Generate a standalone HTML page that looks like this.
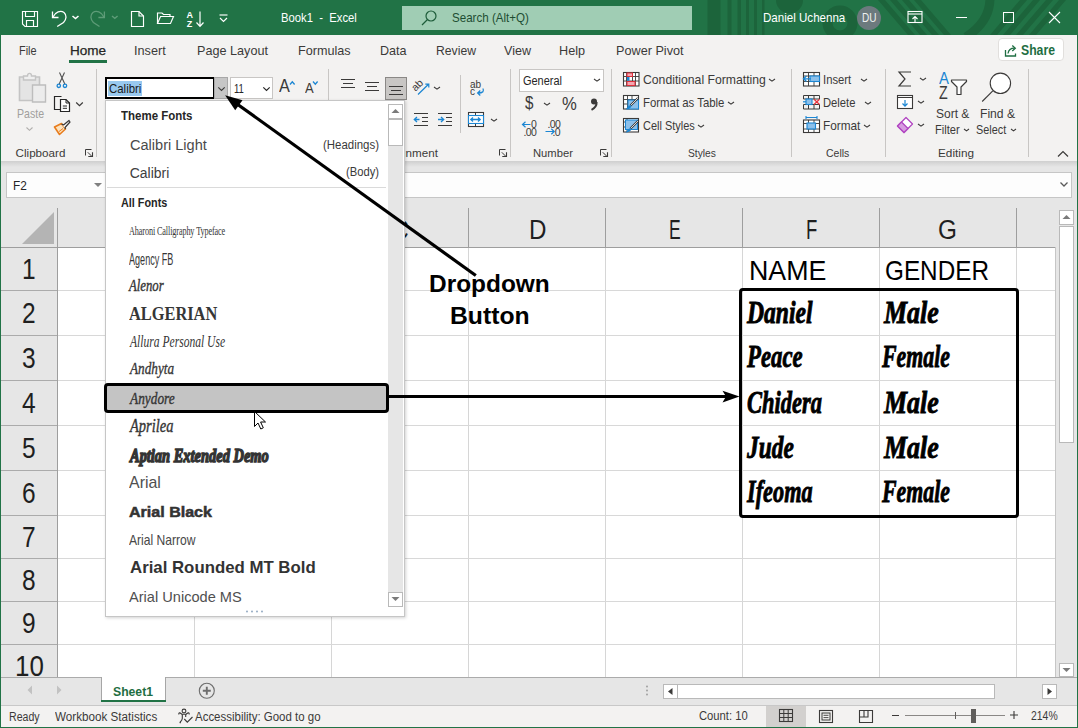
<!DOCTYPE html>
<html><head><meta charset="utf-8"><style>
html,body{margin:0;padding:0;}
body{width:1078px;height:728px;position:relative;overflow:hidden;background:#217346;font-family:"Liberation Sans",sans-serif;}
div{position:absolute;box-sizing:border-box;}
.t{white-space:pre;}
</style></head><body>
<div style="left:0px;top:0px;width:1078px;height:35px;background:#217346;"></div>
<div style="left:1px;top:35px;width:1076px;height:126px;background:#f3f2f1;"></div>
<div style="left:1px;top:161px;width:1076px;height:46px;background:#e6e6e6;"></div>
<div style="left:1px;top:161px;width:1076px;height:6px;background:linear-gradient(#cfcfcf,#e6e6e6);"></div>
<div style="left:6px;top:172px;width:100px;height:26px;background:#fdfdfd;border:1px solid #c6c6c6;"></div>
<div style="left:404px;top:172px;width:668px;height:26px;background:#fdfdfd;border:1px solid #c6c6c6;border-left:none;"></div>
<div style="left:1px;top:207px;width:1076px;height:40px;background:#e6e6e6;"></div>
<div style="left:57px;top:247px;width:998px;height:430px;background:#ffffff;"></div>
<div style="left:1px;top:247px;width:56px;height:430px;background:#e6e6e6;"></div>
<div style="left:1055px;top:207px;width:22px;height:470px;background:#e6e6e6;"></div>
<div style="left:1px;top:677px;width:1076px;height:29px;background:#e6e6e6;border-top:1px solid #ababab;border-bottom:1px solid #c8c8c8;"></div>
<div style="left:1px;top:706px;width:1076px;height:21px;background:#f3f2f1;"></div>
<div style="left:194px;top:248px;width:1px;height:429px;background:#d6d6d6;"></div>
<div style="left:194px;top:208px;width:1px;height:39px;background:#9e9e9e;"></div>
<div style="left:331px;top:248px;width:1px;height:429px;background:#d6d6d6;"></div>
<div style="left:331px;top:208px;width:1px;height:39px;background:#9e9e9e;"></div>
<div style="left:468px;top:248px;width:1px;height:429px;background:#d6d6d6;"></div>
<div style="left:468px;top:208px;width:1px;height:39px;background:#9e9e9e;"></div>
<div style="left:605px;top:248px;width:1px;height:429px;background:#d6d6d6;"></div>
<div style="left:605px;top:208px;width:1px;height:39px;background:#9e9e9e;"></div>
<div style="left:742px;top:248px;width:1px;height:429px;background:#d6d6d6;"></div>
<div style="left:742px;top:208px;width:1px;height:39px;background:#9e9e9e;"></div>
<div style="left:879px;top:248px;width:1px;height:429px;background:#d6d6d6;"></div>
<div style="left:879px;top:208px;width:1px;height:39px;background:#9e9e9e;"></div>
<div style="left:1016px;top:248px;width:1px;height:429px;background:#d6d6d6;"></div>
<div style="left:1016px;top:208px;width:1px;height:39px;background:#9e9e9e;"></div>
<div style="left:58px;top:290px;width:997px;height:1px;background:#d8d8d8;"></div>
<div style="left:1px;top:290px;width:56px;height:1px;background:#ababab;"></div>
<div style="left:58px;top:335px;width:997px;height:1px;background:#d8d8d8;"></div>
<div style="left:1px;top:335px;width:56px;height:1px;background:#ababab;"></div>
<div style="left:58px;top:380px;width:997px;height:1px;background:#d8d8d8;"></div>
<div style="left:1px;top:380px;width:56px;height:1px;background:#ababab;"></div>
<div style="left:58px;top:425px;width:997px;height:1px;background:#d8d8d8;"></div>
<div style="left:1px;top:425px;width:56px;height:1px;background:#ababab;"></div>
<div style="left:58px;top:470px;width:997px;height:1px;background:#d8d8d8;"></div>
<div style="left:1px;top:470px;width:56px;height:1px;background:#ababab;"></div>
<div style="left:58px;top:515px;width:997px;height:1px;background:#d8d8d8;"></div>
<div style="left:1px;top:515px;width:56px;height:1px;background:#ababab;"></div>
<div style="left:58px;top:558px;width:997px;height:1px;background:#d8d8d8;"></div>
<div style="left:1px;top:558px;width:56px;height:1px;background:#ababab;"></div>
<div style="left:58px;top:601px;width:997px;height:1px;background:#d8d8d8;"></div>
<div style="left:1px;top:601px;width:56px;height:1px;background:#ababab;"></div>
<div style="left:58px;top:644px;width:997px;height:1px;background:#d8d8d8;"></div>
<div style="left:1px;top:644px;width:56px;height:1px;background:#ababab;"></div>
<div style="left:57px;top:208px;width:1px;height:469px;background:#9e9e9e;"></div>
<div style="left:1px;top:247px;width:1054px;height:1px;background:#9e9e9e;"></div>
<svg style="position:absolute;left:20px;top:210px;" width="36" height="36" viewBox="0 0 36 36"><polygon points="34,2 34,34 2,34" fill="#b4b4b4"/></svg>
<div class="t" style="left:118.00px;top:216.42px;font-size:27.62px;line-height:27.62px;color:#1f1f1f;transform:scaleX(0.9188);transform-origin:0 0;">A</div>
<div class="t" style="left:256.00px;top:216.42px;font-size:27.62px;line-height:27.62px;color:#1f1f1f;transform:scaleX(0.8168);transform-origin:0 0;">B</div>
<div class="t" style="left:392.75px;top:216.42px;font-size:27.62px;line-height:27.62px;color:#1f1f1f;transform:scaleX(0.7795);transform-origin:0 0;">C</div>
<div class="t" style="left:528.60px;top:216.42px;font-size:27.62px;line-height:27.62px;color:#1f1f1f;transform:scaleX(0.8751);transform-origin:0 0;">D</div>
<div class="t" style="left:668.90px;top:216.42px;font-size:27.62px;line-height:27.62px;color:#1f1f1f;transform:scaleX(0.6371);transform-origin:0 0;">E</div>
<div class="t" style="left:805.90px;top:216.42px;font-size:27.62px;line-height:27.62px;color:#1f1f1f;transform:scaleX(0.6708);transform-origin:0 0;">F</div>
<div class="t" style="left:938.00px;top:216.42px;font-size:27.62px;line-height:27.62px;color:#1f1f1f;transform:scaleX(0.8821);transform-origin:0 0;">G</div>
<div class="t" style="left:22.20px;top:253.58px;font-size:29.80px;line-height:29.80px;color:#1f1f1f;transform:scaleX(0.8224);transform-origin:0 0;">1</div>
<div class="t" style="left:22.20px;top:297.58px;font-size:29.80px;line-height:29.80px;color:#1f1f1f;transform:scaleX(0.8224);transform-origin:0 0;">2</div>
<div class="t" style="left:22.20px;top:342.58px;font-size:29.80px;line-height:29.80px;color:#1f1f1f;transform:scaleX(0.8224);transform-origin:0 0;">3</div>
<div class="t" style="left:22.20px;top:387.58px;font-size:29.80px;line-height:29.80px;color:#1f1f1f;transform:scaleX(0.8224);transform-origin:0 0;">4</div>
<div class="t" style="left:22.20px;top:432.58px;font-size:29.80px;line-height:29.80px;color:#1f1f1f;transform:scaleX(0.8224);transform-origin:0 0;">5</div>
<div class="t" style="left:22.20px;top:477.58px;font-size:29.80px;line-height:29.80px;color:#1f1f1f;transform:scaleX(0.8224);transform-origin:0 0;">6</div>
<div class="t" style="left:22.20px;top:521.58px;font-size:29.80px;line-height:29.80px;color:#1f1f1f;transform:scaleX(0.8224);transform-origin:0 0;">7</div>
<div class="t" style="left:22.20px;top:564.58px;font-size:29.80px;line-height:29.80px;color:#1f1f1f;transform:scaleX(0.8224);transform-origin:0 0;">8</div>
<div class="t" style="left:22.20px;top:607.58px;font-size:29.80px;line-height:29.80px;color:#1f1f1f;transform:scaleX(0.8224);transform-origin:0 0;">9</div>
<div class="t" style="left:14.60px;top:650.58px;font-size:29.80px;line-height:29.80px;color:#1f1f1f;transform:scaleX(0.8708);transform-origin:0 0;">10</div>
<div class="t" style="left:749.00px;top:256.08px;font-size:28.49px;line-height:28.49px;color:#000;transform:scaleX(0.9401);transform-origin:0 0;">NAME</div>
<div class="t" style="left:884.60px;top:256.08px;font-size:28.49px;line-height:28.49px;color:#000;transform:scaleX(0.8529);transform-origin:0 0;">GENDER</div>
<div class="t" style="left:746.74px;top:296.38px;font-size:32.38px;line-height:32.38px;color:#000;font-family:'Liberation Serif',serif;font-weight:bold;font-style:italic;transform:scaleX(0.7295);transform-origin:0 0;-webkit-text-stroke:0.9px #000;">Daniel</div>
<div class="t" style="left:883.89px;top:296.38px;font-size:32.38px;line-height:32.38px;color:#000;font-family:'Liberation Serif',serif;font-weight:bold;font-style:italic;transform:scaleX(0.8009);transform-origin:0 0;-webkit-text-stroke:0.9px #000;">Male</div>
<div class="t" style="left:746.61px;top:340.28px;font-size:32.38px;line-height:32.38px;color:#000;font-family:'Liberation Serif',serif;font-weight:bold;font-style:italic;transform:scaleX(0.7036);transform-origin:0 0;-webkit-text-stroke:0.9px #000;">Peace</div>
<div class="t" style="left:882.21px;top:340.28px;font-size:32.38px;line-height:32.38px;color:#000;font-family:'Liberation Serif',serif;font-weight:bold;font-style:italic;transform:scaleX(0.6752);transform-origin:0 0;-webkit-text-stroke:0.9px #000;">Female</div>
<div class="t" style="left:746.50px;top:385.78px;font-size:32.38px;line-height:32.38px;color:#000;font-family:'Liberation Serif',serif;font-weight:bold;font-style:italic;transform:scaleX(0.6946);transform-origin:0 0;-webkit-text-stroke:0.9px #000;">Chidera</div>
<div class="t" style="left:883.89px;top:385.78px;font-size:32.38px;line-height:32.38px;color:#000;font-family:'Liberation Serif',serif;font-weight:bold;font-style:italic;transform:scaleX(0.8009);transform-origin:0 0;-webkit-text-stroke:0.9px #000;">Male</div>
<div class="t" style="left:746.62px;top:431.38px;font-size:32.38px;line-height:32.38px;color:#000;font-family:'Liberation Serif',serif;font-weight:bold;font-style:italic;transform:scaleX(0.7240);transform-origin:0 0;-webkit-text-stroke:0.9px #000;">Jude</div>
<div class="t" style="left:883.89px;top:431.38px;font-size:32.38px;line-height:32.38px;color:#000;font-family:'Liberation Serif',serif;font-weight:bold;font-style:italic;transform:scaleX(0.8009);transform-origin:0 0;-webkit-text-stroke:0.9px #000;">Male</div>
<div class="t" style="left:746.72px;top:475.18px;font-size:32.38px;line-height:32.38px;color:#000;font-family:'Liberation Serif',serif;font-weight:bold;font-style:italic;transform:scaleX(0.6888);transform-origin:0 0;-webkit-text-stroke:0.9px #000;">Ifeoma</div>
<div class="t" style="left:882.21px;top:475.18px;font-size:32.38px;line-height:32.38px;color:#000;font-family:'Liberation Serif',serif;font-weight:bold;font-style:italic;transform:scaleX(0.6752);transform-origin:0 0;-webkit-text-stroke:0.9px #000;">Female</div>
<div class="t" style="left:429.10px;top:272.97px;font-size:23.55px;line-height:23.55px;color:#000;font-weight:bold;transform:scaleX(1.0375);transform-origin:0 0;">Dropdown</div>
<div class="t" style="left:449.90px;top:304.87px;font-size:23.55px;line-height:23.55px;color:#000;font-weight:bold;transform:scaleX(1.0499);transform-origin:0 0;">Button</div>
<div class="t" style="left:18.70px;top:44.67px;font-size:12.79px;line-height:12.79px;color:#3b3a39;transform:scaleX(0.8547);transform-origin:0 0;">File</div>
<div class="t" style="left:69.70px;top:44.67px;font-size:12.79px;line-height:12.79px;color:#262626;transform:scaleX(1.0600);transform-origin:0 0;-webkit-text-stroke:0.25px #262626;">Home</div>
<div class="t" style="left:134.00px;top:44.67px;font-size:12.79px;line-height:12.79px;color:#3b3a39;transform:scaleX(0.9913);transform-origin:0 0;">Insert</div>
<div class="t" style="left:197.00px;top:44.67px;font-size:12.79px;line-height:12.79px;color:#3b3a39;transform:scaleX(0.9886);transform-origin:0 0;">Page Layout</div>
<div class="t" style="left:298.00px;top:44.67px;font-size:12.79px;line-height:12.79px;color:#3b3a39;transform:scaleX(0.9881);transform-origin:0 0;">Formulas</div>
<div class="t" style="left:380.20px;top:44.67px;font-size:12.79px;line-height:12.79px;color:#3b3a39;transform:scaleX(0.9833);transform-origin:0 0;">Data</div>
<div class="t" style="left:436.00px;top:44.67px;font-size:12.79px;line-height:12.79px;color:#3b3a39;transform:scaleX(0.9534);transform-origin:0 0;">Review</div>
<div class="t" style="left:504.20px;top:44.67px;font-size:12.79px;line-height:12.79px;color:#3b3a39;transform:scaleX(0.9818);transform-origin:0 0;">View</div>
<div class="t" style="left:559.40px;top:44.67px;font-size:12.79px;line-height:12.79px;color:#3b3a39;transform:scaleX(0.9892);transform-origin:0 0;">Help</div>
<div class="t" style="left:616.20px;top:44.67px;font-size:12.79px;line-height:12.79px;color:#3b3a39;transform:scaleX(0.9906);transform-origin:0 0;">Power Pivot</div>
<div style="left:69px;top:60px;width:38px;height:3px;background:#217346;"></div>
<div style="left:998px;top:38px;width:66px;height:23px;background:#fff;border:1px solid #e1dfdd;border-radius:4px;"></div>
<div class="t" style="left:1021.00px;top:44.11px;font-size:13.81px;line-height:13.81px;color:#1e6e42;font-weight:bold;transform:scaleX(0.8857);transform-origin:0 0;">Share</div>
<svg style="position:absolute;left:1004px;top:44px;" width="14" height="13" viewBox="0 0 14 13"><path d="M1.5 6 V12 H11.5 V9.5" fill="none" stroke="#1e6e42" stroke-width="1.3"/><path d="M4 9.5 C4.5 6 7 4.2 10.5 4.2" fill="none" stroke="#1e6e42" stroke-width="1.3"/><path d="M8.3 1.5 L11.3 4.2 L8.3 7" fill="none" stroke="#1e6e42" stroke-width="1.3"/></svg>
<div class="t" style="left:15.60px;top:147.16px;font-size:11.63px;line-height:11.63px;color:#3b3a39;">Clipboard</div>
<div class="t" style="left:532.80px;top:147.16px;font-size:11.63px;line-height:11.63px;color:#3b3a39;transform:scaleX(0.9652);transform-origin:0 0;">Number</div>
<div class="t" style="left:687.50px;top:147.16px;font-size:11.63px;line-height:11.63px;color:#3b3a39;transform:scaleX(0.8805);transform-origin:0 0;">Styles</div>
<div class="t" style="left:826.00px;top:147.16px;font-size:11.63px;line-height:11.63px;color:#3b3a39;transform:scaleX(0.9006);transform-origin:0 0;">Cells</div>
<div class="t" style="left:938.30px;top:147.16px;font-size:11.63px;line-height:11.63px;color:#3b3a39;transform:scaleX(1.0118);transform-origin:0 0;">Editing</div>
<div style="left:96px;top:69px;width:1px;height:88px;background:#c8c6c4;"></div>
<div style="left:328px;top:69px;width:1px;height:88px;background:#c8c6c4;"></div>
<div style="left:510px;top:69px;width:1px;height:88px;background:#c8c6c4;"></div>
<div style="left:611px;top:69px;width:1px;height:88px;background:#c8c6c4;"></div>
<div style="left:791px;top:69px;width:1px;height:88px;background:#c8c6c4;"></div>
<div style="left:885px;top:69px;width:1px;height:88px;background:#c8c6c4;"></div>
<div style="left:1028px;top:69px;width:1px;height:88px;background:#c8c6c4;"></div>
<div style="left:460px;top:75px;width:1px;height:58px;background:#c8c6c4;"></div>
<svg style="position:absolute;left:84px;top:148px;" width="10" height="10" viewBox="0 0 10 10"><path d="M1.5 7.5 V1.5 H7.5" fill="none" stroke="#3b3a39" stroke-width="1"/><path d="M3.8 4.3 L8 8.5" stroke="#3b3a39" stroke-width="1"/><path d="M8.5 4.3 V8.5 H4.3" fill="none" stroke="#3b3a39" stroke-width="1.1"/></svg>
<svg style="position:absolute;left:498px;top:148px;" width="10" height="10" viewBox="0 0 10 10"><path d="M1.5 7.5 V1.5 H7.5" fill="none" stroke="#3b3a39" stroke-width="1"/><path d="M3.8 4.3 L8 8.5" stroke="#3b3a39" stroke-width="1"/><path d="M8.5 4.3 V8.5 H4.3" fill="none" stroke="#3b3a39" stroke-width="1.1"/></svg>
<svg style="position:absolute;left:599px;top:148px;" width="10" height="10" viewBox="0 0 10 10"><path d="M1.5 7.5 V1.5 H7.5" fill="none" stroke="#3b3a39" stroke-width="1"/><path d="M3.8 4.3 L8 8.5" stroke="#3b3a39" stroke-width="1"/><path d="M8.5 4.3 V8.5 H4.3" fill="none" stroke="#3b3a39" stroke-width="1.1"/></svg>
<svg style="position:absolute;left:1057px;top:150px;" width="12" height="8" viewBox="0 0 12 8"><path d="M1 6.5 L6 1.5 L11 6.5" fill="none" stroke="#3b3a39" stroke-width="1.2"/></svg>
<svg style="position:absolute;left:690px;top:0px;" width="388" height="35" viewBox="0 0 388 35"><g transform="translate(-690,0)" fill="#1c643b"><rect x="707.5" y="0" width="13" height="35"/><rect x="727.5" y="0" width="4" height="35"/><rect x="737.5" y="0" width="3.5" height="35"/><rect x="746" y="0" width="3" height="35"/><rect x="754" y="0" width="3" height="35"/><rect x="762" y="0" width="2.5" height="35"/><path d="M776 0 A13.5 13.5 0 0 0 803 0 Z"/><path d="M878 0 L885 0 L915 35 L908 35 Z"/><path d="M890 0 L897 0 L927 35 L920 35 Z"/><path d="M902 0 L909 0 L939 35 L932 35 Z"/><path d="M914 0 L921 0 L951 35 L944 35 Z"/><path d="M1020 0 L1027 0 L997 35 L990 35 Z"/><path d="M1033 0 L1040 0 L1010 35 L1003 35 Z"/><path d="M1046 0 L1053 0 L1023 35 L1016 35 Z"/><path d="M1059 0 L1066 0 L1036 35 L1029 35 Z"/></g><g transform="translate(-690,0)" fill="none" stroke="#1c643b"><circle cx="840" cy="23" r="12.5" stroke-width="10"/><path d="M990 -2 C990 15 980 28 966 37" stroke-width="9"/></g></svg>
<div class="t" style="left:280.70px;top:11.72px;font-size:12.50px;line-height:12.50px;color:#ffffff;transform:scaleX(0.9017);transform-origin:0 0;">Book1  -  Excel</div>
<div style="left:402px;top:6px;width:290px;height:24px;background:#a0cdb4;"></div>
<svg style="position:absolute;left:420px;top:9px;" width="18" height="18" viewBox="0 0 18 18"><circle cx="11" cy="7" r="5" fill="none" stroke="#1e5c3a" stroke-width="1.2"/><path d="M7.5 10.5 L2 16" stroke="#1e5c3a" stroke-width="1.2"/></svg>
<div class="t" style="left:452.30px;top:11.87px;font-size:12.79px;line-height:12.79px;color:#1e4d33;transform:scaleX(0.9066);transform-origin:0 0;">Search (Alt+Q)</div>
<div class="t" style="left:763.00px;top:12.37px;font-size:12.79px;line-height:12.79px;color:#ffffff;transform:scaleX(0.9048);transform-origin:0 0;">Daniel Uchenna</div>
<svg style="position:absolute;left:856px;top:5px;" width="26" height="26" viewBox="0 0 26 26"><circle cx="13" cy="13" r="12" fill="#6c7a7e"/></svg>
<div class="t" style="left:861.50px;top:12.36px;font-size:12.21px;line-height:12.21px;color:#eef0f0;transform:scaleX(0.8219);transform-origin:0 0;">DU</div>
<svg style="position:absolute;left:907px;top:10px;" width="16" height="14" viewBox="0 0 16 14"><rect x="1" y="1.5" width="14" height="11" fill="none" stroke="#fff" stroke-width="1.1"/><path d="M1 4 H15" stroke="#fff" stroke-width="1.1"/><path d="M5.5 9 L8 6.5 L10.5 9 M8 6.5 V12" fill="none" stroke="#fff" stroke-width="1.1"/></svg>
<div style="left:956px;top:17px;width:11px;height:1px;background:#fff;"></div>
<div style="left:1003px;top:12px;width:11px;height:11px;border:1px solid #fff;"></div>
<svg style="position:absolute;left:1048px;top:11px;" width="13" height="13" viewBox="0 0 13 13"><path d="M1 1 L12 12 M12 1 L1 12" stroke="#fff" stroke-width="1.1"/></svg>
<svg style="position:absolute;left:21px;top:10px;" width="18" height="18" viewBox="0 0 18 18"><path d="M1.5 1.5 H16.5 V16.5 H4 L1.5 14 Z" fill="none" stroke="#fff" stroke-width="1.15"/><path d="M4.5 1.5 V6.5 H13.5 V1.5" fill="none" stroke="#fff" stroke-width="1.15"/><path d="M5.5 16.5 V10.5 H12.5 V16.5" fill="none" stroke="#fff" stroke-width="1.15"/></svg>
<svg style="position:absolute;left:45px;top:5px;" width="80" height="27" viewBox="0 0 80 27"><path d="M7.5 6.5 V12.5 H13.5" fill="none" stroke="#fff" stroke-width="1.3"/><path d="M8 12 C10.5 7 15.5 5 19 7.5 C22 10 21.5 14.5 18.5 17.5 L12.2 21.5" fill="none" stroke="#fff" stroke-width="1.3"/><path d="M27.5 11 L30.5 13.5 L33.5 11" fill="none" stroke="#fff" stroke-width="1.6"/><path d="M59.4 6.5 V12.5 H53.4" fill="none" stroke="#5e9c78" stroke-width="1.3"/><path d="M58.9 12 C56.4 7 51.4 5 47.9 7.5 C44.9 10 45.4 14.5 48.4 17.5 L54.5 21.5" fill="none" stroke="#5e9c78" stroke-width="1.3"/><path d="M67 11 L69.8 13.3 L72.6 11" fill="none" stroke="#5e9c78" stroke-width="1.4"/></svg>
<svg style="position:absolute;left:130px;top:10px;" width="15" height="18" viewBox="0 0 15 18"><path d="M1.5 1.5 H9 L13.5 6 V16.5 H1.5 Z" fill="none" stroke="#fff" stroke-width="1.15"/><path d="M9 1.5 V6 H13.5" fill="none" stroke="#fff" stroke-width="1.15"/></svg>
<svg style="position:absolute;left:156px;top:11px;" width="19" height="15" viewBox="0 0 19 15"><path d="M1.5 12.5 V2 H6 L7.5 3.5 H14 V5.5" fill="none" stroke="#fff" stroke-width="1.15"/><path d="M1.5 12.5 L4.5 5.5 H17.5 L14.5 12.5 Z" fill="none" stroke="#fff" stroke-width="1.15"/></svg>
<svg style="position:absolute;left:185px;top:10px;" width="20" height="18" viewBox="0 0 20 18"><text x="1.5" y="7.6" font-size="9" font-weight="bold" fill="#fff" font-family="Liberation Sans">A</text><text x="1.8" y="16.6" font-size="9" font-weight="bold" fill="#fff" font-family="Liberation Sans">Z</text><path d="M15 1.5 V16 M11.5 12.5 L15 16.3 L18.5 12.5" fill="none" stroke="#fff" stroke-width="1.2"/></svg>
<svg style="position:absolute;left:218px;top:14px;" width="11" height="9" viewBox="0 0 11 9"><path d="M1.5 1 H9.5" fill="none" stroke="#fff" stroke-width="1.15"/><path d="M2 4 L5.5 7.5 L9 4" fill="none" stroke="#fff" stroke-width="1.15"/></svg>
<svg style="position:absolute;left:17px;top:71px;" width="32" height="34" viewBox="0 0 32 34"><path d="M2.5 6 H22.5 V29.5 H2.5 Z" fill="#e4e4e4" stroke="#c4c4c4" stroke-width="1.6"/><path d="M6.5 9 V5 H10.5 C10.5 1.5 14.5 1.5 14.5 5 H18.5 V9 Z" fill="#efefef" stroke="#c4c4c4" stroke-width="1.4"/><path d="M15.5 14 H28.5 V31 H15.5 Z" fill="#ececec" stroke="#bdbdbd" stroke-width="1.4"/></svg>
<div class="t" style="left:16.90px;top:107.94px;font-size:12.35px;line-height:12.35px;color:#a19f9d;transform:scaleX(0.8585);transform-origin:0 0;">Paste</div>
<svg style="position:absolute;left:25px;top:126px;" width="9" height="6" viewBox="0 0 9 6"><path d="M1.5 1.5 L4.5 4.3 L7.5 1.5" fill="none" stroke="#b0aeac" stroke-width="1.1"/></svg>
<svg style="position:absolute;left:55px;top:71px;" width="14" height="18" viewBox="0 0 14 18"><path d="M4.5 1.5 L9.8 13 M9.5 1.5 L4.2 13" stroke="#505050" stroke-width="1.1"/><circle cx="3.8" cy="14.8" r="1.7" fill="none" stroke="#1b86d3" stroke-width="1.3"/><circle cx="10" cy="14.8" r="1.7" fill="none" stroke="#1b86d3" stroke-width="1.3"/></svg>
<svg style="position:absolute;left:53px;top:95px;" width="19" height="18" viewBox="0 0 19 18"><path d="M8.5 1.5 H1.5 V14.5 H7" fill="none" stroke="#262626" stroke-width="1.2"/><path d="M7.5 4.5 H13 L16.5 8 V16.5 H7.5 Z" fill="#fff" stroke="#262626" stroke-width="1.2"/><path d="M13 4.5 V8 H16.5" fill="none" stroke="#262626" stroke-width="1"/><path d="M9.8 11 H14 M9.8 13.3 H14" stroke="#262626" stroke-width="1"/></svg>
<svg style="position:absolute;left:75px;top:101px;" width="9" height="7" viewBox="0 0 9 7"><path d="M1.2 1.5 L4.5 4.7 L7.8 1.5" fill="none" stroke="#3b3a39" stroke-width="1.2"/></svg>
<svg style="position:absolute;left:53px;top:119px;" width="18" height="17" viewBox="0 0 18 17"><path d="M1.5 8 L8.5 4.5 L12.5 10 L6.5 15.5 Z" fill="#fce3bf" stroke="#e87d1e" stroke-width="1.6" stroke-linejoin="round"/><path d="M6 12.5 L10 9.5" stroke="#e87d1e" stroke-width="1"/><path d="M8.5 5 L10.5 6 L16 1.5 L17 3 L12 8.5 L12.5 10" fill="#fff" stroke="#3b3a39" stroke-width="1.2" stroke-linejoin="round"/></svg>
<div style="left:105px;top:77px;width:110px;height:22px;background:#fff;border:2px solid #000;"></div>
<div style="left:108px;top:81px;width:34px;height:15px;background:#99c9ef;"></div>
<div class="t" style="left:108.80px;top:82.84px;font-size:12.35px;line-height:12.35px;color:#1a1a1a;transform:scaleX(0.9250);transform-origin:0 0;">Calibri</div>
<div style="left:214px;top:77px;width:14px;height:22px;background:#c6c6c6;border:1px solid #a8a8a8;"></div>
<svg style="position:absolute;left:217px;top:86px;" width="9" height="6" viewBox="0 0 9 6"><path d="M1.3 1.3 L4.5 4.5 L7.7 1.3" fill="none" stroke="#3b3a39" stroke-width="1.1"/></svg>
<div style="left:230px;top:77px;width:43px;height:22px;background:#fff;border:1px solid #c8c6c4;"></div>
<div class="t" style="left:233.80px;top:82.90px;font-size:12.65px;line-height:12.65px;color:#262626;transform:scaleX(0.7528);transform-origin:0 0;">11</div>
<svg style="position:absolute;left:262px;top:86px;" width="9" height="6" viewBox="0 0 9 6"><path d="M1.3 1.3 L4.5 4.5 L7.7 1.3" fill="none" stroke="#262626" stroke-width="1.2"/></svg>
<div class="t" style="left:279.00px;top:77.40px;font-size:18.31px;line-height:18.31px;color:#3b3a39;transform:scaleX(0.8883);transform-origin:0 0;">A</div>
<svg style="position:absolute;left:289px;top:80px;" width="7" height="6" viewBox="0 0 7 6"><path d="M1 4.5 L3.3 1.8 L5.6 4.5" fill="none" stroke="#1b86d3" stroke-width="1.3"/></svg>
<div class="t" style="left:304.70px;top:81.42px;font-size:14.39px;line-height:14.39px;color:#3b3a39;transform:scaleX(0.9024);transform-origin:0 0;">A</div>
<svg style="position:absolute;left:312px;top:80px;" width="7" height="6" viewBox="0 0 7 6"><path d="M1 1.5 L3.3 4.2 L5.6 1.5" fill="none" stroke="#1b86d3" stroke-width="1.3"/></svg>
<svg style="position:absolute;left:340px;top:78px;" width="16" height="13" viewBox="0 0 16 13"><path d="M1 1.5 H15 M3 5.5 H13 M1 9.5 H15" stroke="#3b3a39" stroke-width="1.1"/></svg>
<svg style="position:absolute;left:364px;top:81px;" width="16" height="13" viewBox="0 0 16 13"><path d="M1 1.5 H15 M3 5.5 H13 M1 9.5 H15" stroke="#3b3a39" stroke-width="1.1"/></svg>
<div style="left:385px;top:77px;width:22px;height:23px;background:#c8c6c4;border:1px solid #8a8886;"></div>
<svg style="position:absolute;left:388px;top:84px;" width="16" height="14" viewBox="0 0 16 14"><path d="M1 2.5 H15 M3 6.5 H13 M1 10.5 H15" stroke="#3b3a39" stroke-width="1.1"/></svg>
<svg style="position:absolute;left:410px;top:76px;" width="24" height="22" viewBox="0 0 24 22"><text x="0" y="0" font-size="10.5" font-family="Liberation Sans" fill="#3b3a39" transform="translate(5.5,15.8) rotate(-45)">ab</text><path d="M8 18.5 L18.5 8.2 M15.3 8.2 H18.8 V11.5" fill="none" stroke="#1b86d3" stroke-width="1.2"/></svg>
<svg style="position:absolute;left:432.6px;top:86px;" width="8" height="5" viewBox="0 0 8 5"><path d="M1 1 L4.0 3.1500000000000004 L7 1" fill="none" stroke="#3b3a39" stroke-width="1.1"/></svg>
<svg style="position:absolute;left:412px;top:111px;" width="18" height="16" viewBox="0 0 18 16"><path d="M2 2.5 H16 M10 6.5 H16 M10 10.5 H16 M2 14.5 H16" stroke="#3b3a39" stroke-width="1.1"/><path d="M7.5 8.5 H2.5 M5 6 L2.3 8.5 L5 11" fill="none" stroke="#1b86d3" stroke-width="1.3"/></svg>
<svg style="position:absolute;left:436px;top:111px;" width="18" height="16" viewBox="0 0 18 16"><path d="M2 2.5 H16 M10 6.5 H16 M10 10.5 H16 M2 14.5 H16" stroke="#3b3a39" stroke-width="1.1"/><path d="M2 8.5 H7.5 M5 6 L7.7 8.5 L5 11" fill="none" stroke="#1b86d3" stroke-width="1.3"/></svg>
<svg style="position:absolute;left:468px;top:78px;" width="18" height="19" viewBox="0 0 18 19"><text x="2" y="9.5" font-size="10" font-family="Liberation Sans" fill="#3b3a39">ab</text><text x="2" y="17" font-size="10" font-family="Liberation Sans" fill="#3b3a39">c</text><path d="M14.8 10.5 C16.5 13 15 15 10 15 M12.3 12.6 L9.7 15 L12.3 17.4" fill="none" stroke="#1b86d3" stroke-width="1.3"/></svg>
<svg style="position:absolute;left:467px;top:111px;" width="18" height="17" viewBox="0 0 18 17"><rect x="1.5" y="1.5" width="15" height="14" fill="#fff" stroke="#3b3a39" stroke-width="1.1"/><path d="M8.5 1.5 V4.5 M8.5 12.5 V15.5" stroke="#3b3a39" stroke-width="1"/><rect x="1.5" y="4.5" width="15" height="8" fill="#fff" stroke="#1b86d3" stroke-width="1.1"/><path d="M4 8.5 H13 M6 6.5 L3.8 8.5 L6 10.5 M11 6.5 L13.2 8.5 L11 10.5" fill="none" stroke="#1b86d3" stroke-width="1.3"/></svg>
<svg style="position:absolute;left:489.5px;top:117.7px;" width="8" height="5" viewBox="0 0 8 5"><path d="M1 1 L4.0 3.1500000000000004 L7 1" fill="none" stroke="#3b3a39" stroke-width="1.1"/></svg>
<div class="t" style="left:386.21px;top:147.16px;font-size:11.63px;line-height:11.63px;color:#3b3a39;">Alignment</div>
<div style="left:519px;top:69px;width:85px;height:23px;background:#fff;border:1px solid #c8c6c4;"></div>
<div class="t" style="left:522.60px;top:75.20px;font-size:12.65px;line-height:12.65px;color:#262626;transform:scaleX(0.8663);transform-origin:0 0;">General</div>
<svg style="position:absolute;left:593px;top:78px;" width="8" height="5" viewBox="0 0 8 5"><path d="M1 1 L4.0 3.1500000000000004 L7 1" fill="none" stroke="#3b3a39" stroke-width="1.1"/></svg>
<div class="t" style="left:525.40px;top:94.02px;font-size:18.17px;line-height:18.17px;color:#3b3a39;transform:scaleX(0.8330);transform-origin:0 0;">$</div>
<svg style="position:absolute;left:543px;top:102px;" width="8" height="5" viewBox="0 0 8 5"><path d="M1 1 L4.0 3.1500000000000004 L7 1" fill="none" stroke="#3b3a39" stroke-width="1.1"/></svg>
<div class="t" style="left:561.60px;top:94.36px;font-size:19.19px;line-height:19.19px;color:#3b3a39;transform:scaleX(0.8667);transform-origin:0 0;">%</div>
<svg style="position:absolute;left:588px;top:97px;" width="11" height="15" viewBox="0 0 11 15"><circle cx="6" cy="4.5" r="3" fill="#3b3a39"/><path d="M8.6 5 C8.8 8.5 7 11 3.5 12.8" fill="none" stroke="#3b3a39" stroke-width="2"/></svg>
<svg style="position:absolute;left:520px;top:118px;" width="20" height="19" viewBox="0 0 20 19"><text x="11" y="9.5" font-size="10.5" font-family="Liberation Sans" fill="#3b3a39">0</text><text x="3.5" y="17.5" font-size="10.5" font-family="Liberation Sans" fill="#3b3a39" letter-spacing="-0.6">.00</text><path d="M2.5 6.5 H10.5 M5.5 3.8 L2.5 6.5 L5.5 9.2" fill="none" stroke="#1b86d3" stroke-width="1.2"/></svg>
<svg style="position:absolute;left:544px;top:118px;" width="20" height="19" viewBox="0 0 20 19"><text x="3.5" y="9.5" font-size="10.5" font-family="Liberation Sans" fill="#3b3a39" letter-spacing="-0.6">.00</text><text x="8.5" y="17.5" font-size="10.5" font-family="Liberation Sans" fill="#3b3a39" letter-spacing="-0.6">.0</text><path d="M1.5 13.5 H10 M7.3 10.8 L10.2 13.5 L7.3 16.2" fill="none" stroke="#1b86d3" stroke-width="1.2"/></svg>
<svg style="position:absolute;left:622px;top:71px;" width="18" height="16" viewBox="0 0 18 16"><rect x="1.5" y="1.5" width="15.5" height="13.5" fill="#fff" stroke="#3b3a39" stroke-width="1.1"/><path d="M4.5 1.5 V15 M10.5 5.5 V10 M13.5 1.5 V15 M1.5 5.5 H17 M1.5 10 H17" stroke="#3b3a39" stroke-width="0.9"/><rect x="5" y="2" width="5.5" height="3.5" fill="#f4a6b0" stroke="#e0303c" stroke-width="1"/><rect x="5" y="10.5" width="8" height="4" fill="#f4a6b0" stroke="#e0303c" stroke-width="1"/><rect x="5" y="6" width="2.5" height="3.8" fill="#1b86d3"/></svg>
<svg style="position:absolute;left:622px;top:94px;" width="18" height="16" viewBox="0 0 18 16"><rect x="1.5" y="1.5" width="15" height="13.5" fill="#fff" stroke="#3b3a39" stroke-width="1.1"/><path d="M5.5 1.5 V15 M10 1.5 V6 M1.5 5.5 H16.5 M1.5 10 H5.5" stroke="#3b3a39" stroke-width="0.9"/><rect x="6" y="6" width="10.5" height="9" fill="#8cc0ea" stroke="#1b86d3" stroke-width="1"/><path d="M16 4 L8.5 11.5" stroke="#3b3a39" stroke-width="2.2"/><path d="M16 4 L8.5 11.5" stroke="#fff" stroke-width="0.8"/><path d="M8.5 11 C6 11.5 5 14 3.5 15.5 C6.5 15.5 9 14 9.5 12" fill="#1b86d3"/></svg>
<svg style="position:absolute;left:622px;top:117px;" width="18" height="16" viewBox="0 0 18 16"><rect x="1.5" y="1.5" width="15" height="13.5" fill="#fff" stroke="#3b3a39" stroke-width="1.1"/><path d="M1.5 5 H5 M5 1.5 V15 M1.5 10 H5" stroke="#3b3a39" stroke-width="0.9"/><rect x="3.5" y="3" width="12" height="9.5" fill="#8cc0ea" stroke="#1b86d3" stroke-width="1"/><path d="M16 4 L8.5 11.5" stroke="#3b3a39" stroke-width="2.2"/><path d="M16 4 L8.5 11.5" stroke="#fff" stroke-width="0.8"/><path d="M8.5 11 C6 11.5 5 14 3.5 15.5 C6.5 15.5 9 14 9.5 12" fill="#1b86d3"/></svg>
<div class="t" style="left:642.50px;top:74.04px;font-size:12.35px;line-height:12.35px;color:#3b3a39;transform:scaleX(0.9896);transform-origin:0 0;">Conditional Formatting</div>
<svg style="position:absolute;left:768px;top:78px;" width="8" height="5" viewBox="0 0 8 5"><path d="M1 1 L4.0 3.1500000000000004 L7 1" fill="none" stroke="#3b3a39" stroke-width="1.1"/></svg>
<div class="t" style="left:642.50px;top:96.94px;font-size:12.35px;line-height:12.35px;color:#3b3a39;transform:scaleX(0.9226);transform-origin:0 0;">Format as Table</div>
<svg style="position:absolute;left:727px;top:101px;" width="8" height="5" viewBox="0 0 8 5"><path d="M1 1 L4.0 3.1500000000000004 L7 1" fill="none" stroke="#3b3a39" stroke-width="1.1"/></svg>
<div class="t" style="left:642.50px;top:120.14px;font-size:12.35px;line-height:12.35px;color:#3b3a39;transform:scaleX(0.8891);transform-origin:0 0;">Cell Styles</div>
<svg style="position:absolute;left:697px;top:124px;" width="8" height="5" viewBox="0 0 8 5"><path d="M1 1 L4.0 3.1500000000000004 L7 1" fill="none" stroke="#3b3a39" stroke-width="1.1"/></svg>
<svg style="position:absolute;left:802px;top:71px;" width="19" height="16" viewBox="0 0 19 16"><rect x="1.5" y="1.5" width="16" height="13.5" fill="#fff" stroke="#3b3a39" stroke-width="1.1"/><path d="M6.5 1.5 V15 M12 1.5 V15 M1.5 5 H17.5 M1.5 10.5 H17.5" stroke="#3b3a39" stroke-width="0.9"/><rect x="8" y="5" width="9.5" height="5.5" fill="#8cc0ea" stroke="#1b86d3" stroke-width="1.1"/><path d="M9 7.8 H1.5 M4.5 5 L1.5 7.8 L4.5 10.6" fill="none" stroke="#1b86d3" stroke-width="1.3"/></svg>
<div class="t" style="left:822.50px;top:74.04px;font-size:12.35px;line-height:12.35px;color:#3b3a39;transform:scaleX(0.9130);transform-origin:0 0;">Insert</div>
<svg style="position:absolute;left:860px;top:78px;" width="8" height="5" viewBox="0 0 8 5"><path d="M1 1 L4.0 3.1500000000000004 L7 1" fill="none" stroke="#3b3a39" stroke-width="1.1"/></svg>
<svg style="position:absolute;left:802px;top:94px;" width="19" height="16" viewBox="0 0 19 16"><path d="M1.5 5 V1.5 H17.5 V5 M1.5 10.5 V15 H17.5 V10.5 M6.5 1.5 V5 M12 1.5 V5 M6.5 10.5 V15 M12 10.5 V15 M1.5 5 H17.5 M1.5 10.5 H17.5" fill="none" stroke="#3b3a39" stroke-width="1"/><rect x="4" y="5" width="6" height="5.5" fill="#8cc0ea" stroke="#1b86d3" stroke-width="1.1"/><path d="M1 7.8 H4" stroke="#1b86d3" stroke-width="1.2"/><path d="M12 5.3 L17.5 10.5 M17.5 5.3 L12 10.5" stroke="#e8323c" stroke-width="1.2"/></svg>
<div class="t" style="left:822.50px;top:96.94px;font-size:12.35px;line-height:12.35px;color:#3b3a39;transform:scaleX(0.9102);transform-origin:0 0;">Delete</div>
<svg style="position:absolute;left:864px;top:101px;" width="8" height="5" viewBox="0 0 8 5"><path d="M1 1 L4.0 3.1500000000000004 L7 1" fill="none" stroke="#3b3a39" stroke-width="1.1"/></svg>
<svg style="position:absolute;left:802px;top:116px;" width="19" height="18" viewBox="0 0 19 18"><rect x="1.5" y="4" width="16" height="12.5" fill="#fff" stroke="#3b3a39" stroke-width="1.1"/><path d="M6.5 4 V16.5 M12 4 V16.5 M1.5 7.5 H17.5 M1.5 13 H17.5" stroke="#3b3a39" stroke-width="0.9"/><rect x="5" y="7" width="8.5" height="6" fill="#8cc0ea" stroke="#1b86d3" stroke-width="1.1"/><path d="M4 1.5 H15 M4 0 V3 M15 0 V3" stroke="#1b86d3" stroke-width="1.1"/></svg>
<div class="t" style="left:822.50px;top:120.14px;font-size:12.35px;line-height:12.35px;color:#3b3a39;transform:scaleX(0.9565);transform-origin:0 0;">Format</div>
<svg style="position:absolute;left:863px;top:124px;" width="8" height="5" viewBox="0 0 8 5"><path d="M1 1 L4.0 3.1500000000000004 L7 1" fill="none" stroke="#3b3a39" stroke-width="1.1"/></svg>
<svg style="position:absolute;left:897px;top:70px;" width="16" height="18" viewBox="0 0 16 18"><path d="M14 2 H2 L8 9 L2 16 H14" fill="none" stroke="#3b3a39" stroke-width="1.2"/></svg>
<svg style="position:absolute;left:918.6px;top:77px;" width="8" height="5" viewBox="0 0 8 5"><path d="M1 1 L4.0 3.1500000000000004 L7 1" fill="none" stroke="#3b3a39" stroke-width="1.1"/></svg>
<svg style="position:absolute;left:896px;top:94px;" width="18" height="16" viewBox="0 0 18 16"><rect x="1.5" y="1.5" width="15" height="13" fill="#fff" stroke="#3b3a39" stroke-width="1.1"/><path d="M1.5 3.5 H16.5" stroke="#3b3a39" stroke-width="1"/><path d="M9 6 V12 M6.5 9.5 L9 12.2 L11.5 9.5" fill="none" stroke="#1b86d3" stroke-width="1.2"/></svg>
<svg style="position:absolute;left:917px;top:99.5px;" width="8" height="5" viewBox="0 0 8 5"><path d="M1 1 L4.0 3.1500000000000004 L7 1" fill="none" stroke="#3b3a39" stroke-width="1.1"/></svg>
<svg style="position:absolute;left:896px;top:116px;" width="18" height="18" viewBox="0 0 18 18"><path d="M1.5 10 L10 1.5 L16.5 8 L8 16.5 Z" fill="#fff" stroke="#b146c2" stroke-width="1.3" stroke-linejoin="round"/><path d="M1.5 10 L5.5 6 L12 12.5 L8 16.5 Z" fill="#d79ce0" stroke="#b146c2" stroke-width="1.3" stroke-linejoin="round"/></svg>
<svg style="position:absolute;left:917px;top:123px;" width="8" height="5" viewBox="0 0 8 5"><path d="M1 1 L4.0 3.1500000000000004 L7 1" fill="none" stroke="#3b3a39" stroke-width="1.1"/></svg>
<div class="t" style="left:939.10px;top:71.35px;font-size:16.72px;line-height:16.72px;color:#1b86d3;transform:scaleX(0.8929);transform-origin:0 0;">A</div>
<div class="t" style="left:939.10px;top:85.24px;font-size:17.44px;line-height:17.44px;color:#3b3a39;transform:scaleX(0.8177);transform-origin:0 0;">Z</div>
<svg style="position:absolute;left:950px;top:78px;" width="18" height="19" viewBox="0 0 18 19"><path d="M1.5 2 H16.5 V3.5 L11 9 V16.5 H7 V9 L1.5 3.5 Z" fill="#fff" stroke="#3b3a39" stroke-width="1.2" stroke-linejoin="round"/></svg>
<div class="t" style="left:936.10px;top:108.24px;font-size:12.35px;line-height:12.35px;color:#3b3a39;transform:scaleX(0.9725);transform-origin:0 0;">Sort &amp;</div>
<div class="t" style="left:934.80px;top:123.74px;font-size:12.35px;line-height:12.35px;color:#3b3a39;transform:scaleX(0.9006);transform-origin:0 0;">Filter</div>
<svg style="position:absolute;left:963px;top:128px;" width="7" height="5" viewBox="0 0 7 5"><path d="M1 1 L3.5 2.875 L6 1" fill="none" stroke="#3b3a39" stroke-width="1.1"/></svg>
<svg style="position:absolute;left:980px;top:71px;" width="33" height="33" viewBox="0 0 33 33"><circle cx="20.4" cy="12.3" r="10.2" fill="#fff" stroke="#3b3a39" stroke-width="1.1"/><path d="M12.8 19.8 L2.2 30.5" stroke="#3b3a39" stroke-width="1.1"/></svg>
<div class="t" style="left:979.60px;top:108.24px;font-size:12.35px;line-height:12.35px;color:#3b3a39;transform:scaleX(0.9831);transform-origin:0 0;">Find &amp;</div>
<div class="t" style="left:976.40px;top:123.74px;font-size:12.35px;line-height:12.35px;color:#3b3a39;transform:scaleX(0.8793);transform-origin:0 0;">Select</div>
<svg style="position:absolute;left:1010px;top:128px;" width="7" height="5" viewBox="0 0 7 5"><path d="M1 1 L3.5 2.875 L6 1" fill="none" stroke="#3b3a39" stroke-width="1.1"/></svg>
<div style="left:105px;top:100px;width:300px;height:517px;background:#fff;border:1px solid #c6c6c6;box-shadow:1px 1px 3px rgba(0,0,0,0.18);"></div>
<div style="left:388px;top:101px;width:16px;height:515px;background:#fff;"></div>
<div style="left:388px;top:119px;width:15px;height:473px;background:#e6e6e6;"></div>
<div style="left:388px;top:104px;width:15px;height:15px;background:#fff;border:1px solid #b9b9b9;"></div>
<svg style="position:absolute;left:390px;top:106px;" width="11" height="10" viewBox="0 0 11 10"><path d="M1.5 7 L5.5 3 L9.5 7 Z" fill="#7a7a7a"/></svg>
<div style="left:388px;top:119px;width:15px;height:27px;background:#fff;border:1px solid #b9b9b9;"></div>
<div style="left:388px;top:592px;width:15px;height:15px;background:#fff;border:1px solid #b9b9b9;"></div>
<svg style="position:absolute;left:390px;top:594px;" width="11" height="10" viewBox="0 0 11 10"><path d="M1.5 3 L5.5 7 L9.5 3 Z" fill="#7a7a7a"/></svg>
<div class="t" style="left:121.40px;top:110.71px;font-size:11.92px;line-height:11.92px;color:#262626;font-weight:bold;transform:scaleX(0.9650);transform-origin:0 0;">Theme Fonts</div>
<div class="t" style="left:129.80px;top:139.19px;font-size:13.95px;line-height:13.95px;color:#4a4a4a;transform:scaleX(1.0438);transform-origin:0 0;">Calibri Light</div>
<div class="t" style="left:323.00px;top:137.63px;font-size:13.08px;line-height:13.08px;color:#3a3a3a;transform:scaleX(0.8754);transform-origin:0 0;">(Headings)</div>
<div class="t" style="left:129.80px;top:166.69px;font-size:13.95px;line-height:13.95px;color:#404040;">Calibri</div>
<div class="t" style="left:346.00px;top:165.43px;font-size:13.08px;line-height:13.08px;color:#3a3a3a;transform:scaleX(0.8566);transform-origin:0 0;">(Body)</div>
<div style="left:107px;top:187px;width:279px;height:1px;background:#dadada;"></div>
<div class="t" style="left:121.40px;top:197.06px;font-size:12.21px;line-height:12.21px;color:#262626;font-weight:bold;transform:scaleX(0.8871);transform-origin:0 0;">All Fonts</div>
<div class="t" style="left:128.80px;top:226.11px;font-size:11.45px;line-height:11.45px;color:#363636;font-family:'Liberation Serif',serif;transform:scaleX(0.7219);transform-origin:0 0;letter-spacing:-0.2px;">Aharoni Calligraphy Typeface</div>
<div class="t" style="left:128.80px;top:250.70px;font-size:16.42px;line-height:16.42px;color:#363636;transform:scaleX(0.5528);transform-origin:0 0;">Agency FB</div>
<div class="t" style="left:128.70px;top:278.23px;font-size:16.80px;line-height:16.80px;color:#363636;font-family:'Liberation Serif',serif;font-style:italic;transform:scaleX(0.7588);transform-origin:0 0;-webkit-text-stroke:0.4px #363636;">Alenor</div>
<div class="t" style="left:129.40px;top:305.84px;font-size:17.87px;line-height:17.87px;color:#363636;font-family:'Liberation Serif',serif;font-weight:bold;transform:scaleX(0.9168);transform-origin:0 0;">ALGERIAN</div>
<div class="t" style="left:130.04px;top:333.73px;font-size:16.80px;line-height:16.80px;color:#363636;font-family:'Liberation Serif',serif;font-style:italic;transform:scaleX(0.6891);transform-origin:0 0;">Allura Personal Use</div>
<div class="t" style="left:129.73px;top:360.29px;font-size:17.56px;line-height:17.56px;color:#363636;font-family:'Liberation Serif',serif;font-style:italic;transform:scaleX(0.7541);transform-origin:0 0;-webkit-text-stroke:0.35px #363636;">Andhyta</div>
<div style="left:104px;top:383px;width:285px;height:30px;background:#c4c4c4;border:3px solid #000;border-radius:4px;"></div>
<div class="t" style="left:130.13px;top:389.79px;font-size:17.56px;line-height:17.56px;color:#363636;font-family:'Liberation Serif',serif;font-style:italic;transform:scaleX(0.7609);transform-origin:0 0;-webkit-text-stroke:0.4px #363636;">Anydore</div>
<div class="t" style="left:130.20px;top:417.35px;font-size:18.33px;line-height:18.33px;color:#363636;font-family:'Liberation Serif',serif;font-style:italic;transform:scaleX(0.7895);transform-origin:0 0;-webkit-text-stroke:0.4px #363636;">Aprilea</div>
<div class="t" style="left:130.19px;top:446.27px;font-size:19.85px;line-height:19.85px;color:#333;font-family:'Liberation Serif',serif;font-weight:bold;font-style:italic;transform:scaleX(0.7275);transform-origin:0 0;-webkit-text-stroke:1.5px #333;">Aptian Extended Demo</div>
<div class="t" style="left:129.40px;top:473.50px;font-size:17.01px;line-height:17.01px;color:#505050;transform:scaleX(0.9379);transform-origin:0 0;">Arial</div>
<div class="t" style="left:129.40px;top:505.44px;font-size:14.24px;line-height:14.24px;color:#333;font-weight:bold;transform:scaleX(1.1273);transform-origin:0 0;-webkit-text-stroke:0.5px #333;">Arial Black</div>
<div class="t" style="left:129.40px;top:531.83px;font-size:15.55px;line-height:15.55px;color:#484848;transform:scaleX(0.7779);transform-origin:0 0;">Arial Narrow</div>
<div class="t" style="left:130.10px;top:558.50px;font-size:17.01px;line-height:17.01px;color:#333;font-weight:bold;transform:scaleX(0.9878);transform-origin:0 0;">Arial Rounded MT Bold</div>
<div class="t" style="left:129.10px;top:588.50px;font-size:15.12px;line-height:15.12px;color:#505050;transform:scaleX(0.9660);transform-origin:0 0;">Arial Unicode MS</div>
<svg style="position:absolute;left:244px;top:609px;" width="22" height="5" viewBox="0 0 22 5"><circle cx="3" cy="2.5" r="0.9" fill="#8aa3bd"/><circle cx="8" cy="2.5" r="0.9" fill="#8aa3bd"/><circle cx="13" cy="2.5" r="0.9" fill="#8aa3bd"/><circle cx="18" cy="2.5" r="0.9" fill="#8aa3bd"/></svg>
<div class="t" style="left:13.20px;top:179.38px;font-size:13.37px;line-height:13.37px;color:#262626;transform:scaleX(0.8858);transform-origin:0 0;">F2</div>
<svg style="position:absolute;left:93px;top:182px;" width="10" height="6" viewBox="0 0 10 6"><path d="M1 1 H9 L5 5 Z" fill="#808080"/></svg>
<svg style="position:absolute;left:1058.5px;top:181px;" width="10" height="7" viewBox="0 0 10 7"><path d="M1.5 1.5 L5 5 L8.5 1.5" fill="none" stroke="#5a5a5a" stroke-width="1.3"/></svg>
<div style="left:1059px;top:210px;width:15px;height:15px;background:#fff;border:1px solid #b9b9b9;"></div>
<svg style="position:absolute;left:1061px;top:213px;" width="11" height="8" viewBox="0 0 11 8"><path d="M1.5 6 L5.5 2 L9.5 6 Z" fill="#7a7a7a"/></svg>
<div style="left:1059px;top:226px;width:15px;height:217px;background:#fff;border:1px solid #b9b9b9;"></div>
<div style="left:1055px;top:247px;width:1px;height:430px;background:#c6c6c6;"></div>
<div style="left:1059px;top:663px;width:15px;height:14px;background:#fff;border:1px solid #b9b9b9;"></div>
<svg style="position:absolute;left:1061px;top:666px;" width="11" height="8" viewBox="0 0 11 8"><path d="M1.5 2 L5.5 6 L9.5 2 Z" fill="#7a7a7a"/></svg>
<div style="left:739px;top:288px;width:280px;height:230px;border:3px solid #000;border-radius:4px;"></div>
<svg style="position:absolute;left:0px;top:0px;pointer-events:none;" width="1078" height="728" viewBox="0 0 1078 728"><line x1="236" y1="103.2" x2="475.8" y2="275.5" stroke="#000" stroke-width="3.2"/><polygon points="225.1,95.2 242.5,100.2 235.2,110.2" fill="#000"/><line x1="389" y1="396.6" x2="726" y2="396.6" stroke="#000" stroke-width="3"/><polygon points="739.5,396.6 722.5,390.8 726,396.6 722.5,402.4" fill="#000"/></svg>
<svg style="position:absolute;left:253px;top:410px;" width="16" height="22" viewBox="0 0 16 22"><path d="M1.5 1.5 V16.5 L5 13 L7.8 19 L10.3 17.8 L7.6 12 H12.5 Z" fill="#fff" stroke="#000" stroke-width="1" stroke-linejoin="round"/></svg>
<svg style="position:absolute;left:26px;top:684px;" width="8" height="12" viewBox="0 0 8 12"><path d="M6 1.5 L1.5 6 L6 10.5 Z" fill="#c2c2c2"/></svg>
<svg style="position:absolute;left:55px;top:684px;" width="8" height="12" viewBox="0 0 8 12"><path d="M2 1.5 L6.5 6 L2 10.5 Z" fill="#c2c2c2"/></svg>
<div style="left:101px;top:677px;width:65px;height:25px;background:#fff;border-right:1px solid #a6a6a6;border-left:1px solid #a6a6a6;"></div>
<div style="left:101px;top:700px;width:65px;height:2px;background:#217346;"></div>
<div class="t" style="left:113.40px;top:684.63px;font-size:13.08px;line-height:13.08px;color:#1e6e42;font-weight:bold;transform:scaleX(0.9322);transform-origin:0 0;">Sheet1</div>
<svg style="position:absolute;left:198px;top:682px;" width="18" height="18" viewBox="0 0 18 18"><circle cx="8.8" cy="8.8" r="7.5" fill="none" stroke="#6e6e6e" stroke-width="1.1"/><path d="M8.8 4.8 V12.8 M4.8 8.8 H12.8" stroke="#6e6e6e" stroke-width="1.9"/></svg>
<svg style="position:absolute;left:644px;top:684px;" width="6" height="14" viewBox="0 0 6 14"><circle cx="3" cy="2.5" r="0.9" fill="#9a9a9a"/><circle cx="3" cy="6.5" r="0.9" fill="#9a9a9a"/><circle cx="3" cy="10.5" r="0.9" fill="#9a9a9a"/></svg>
<div style="left:663px;top:684px;width:15px;height:15px;background:#fff;border:1px solid #b9b9b9;"></div>
<svg style="position:absolute;left:666px;top:687px;" width="9" height="9" viewBox="0 0 9 9"><path d="M6.5 1 L2 4.5 L6.5 8 Z" fill="#3b3a39"/></svg>
<div style="left:677px;top:684px;width:318px;height:15px;background:#fff;border:1px solid #b9b9b9;"></div>
<div style="left:1042px;top:684px;width:15px;height:15px;background:#fff;border:1px solid #b9b9b9;"></div>
<svg style="position:absolute;left:1045px;top:687px;" width="9" height="9" viewBox="0 0 9 9"><path d="M2.5 1 L7 4.5 L2.5 8 Z" fill="#3b3a39"/></svg>
<div class="t" style="left:9.20px;top:711.16px;font-size:12.21px;line-height:12.21px;color:#3b3a39;transform:scaleX(0.8672);transform-origin:0 0;">Ready</div>
<div class="t" style="left:55.00px;top:711.16px;font-size:12.21px;line-height:12.21px;color:#3b3a39;transform:scaleX(0.9565);transform-origin:0 0;">Workbook Statistics</div>
<svg style="position:absolute;left:176px;top:706px;" width="19" height="19" viewBox="0 0 19 19"><circle cx="8" cy="5" r="1.9" fill="none" stroke="#3b3a39" stroke-width="1.1"/><path d="M2.8 8.5 C2.5 6.5 4 6.5 5 7.5 C5.8 8.2 6.2 8.3 6.3 8.3 H9.7 C10 8.3 10.5 8 11 7.5 C12 6.5 13.5 6.5 13.2 8.5" fill="none" stroke="#3b3a39" stroke-width="1.1"/><path d="M6.3 8.3 V12.5 C6.2 14 5.3 15 4.3 16 C3.8 16.5 4 17 4.8 16.6" fill="none" stroke="#3b3a39" stroke-width="1.1"/><path d="M9.7 8.3 V11" fill="none" stroke="#3b3a39" stroke-width="1.1"/><path d="M8.3 13 L11.3 16.2 L16.5 11" fill="none" stroke="#3b3a39" stroke-width="1.1"/></svg>
<div class="t" style="left:195.40px;top:711.16px;font-size:12.21px;line-height:12.21px;color:#3b3a39;transform:scaleX(0.9395);transform-origin:0 0;">Accessibility: Good to go</div>
<div class="t" style="left:699.00px;top:710.36px;font-size:12.21px;line-height:12.21px;color:#3b3a39;transform:scaleX(0.9201);transform-origin:0 0;">Count: 10</div>
<div style="left:766px;top:706px;width:40px;height:21px;background:#d2d0ce;"></div>
<svg style="position:absolute;left:778px;top:708px;" width="16" height="15" viewBox="0 0 16 15"><rect x="1.5" y="1.5" width="13" height="12" fill="none" stroke="#3b3a39" stroke-width="1.1"/><path d="M5.8 1.5 V13.5 M10.2 1.5 V13.5 M1.5 5.5 H14.5 M1.5 9.5 H14.5" stroke="#3b3a39" stroke-width="1"/></svg>
<svg style="position:absolute;left:818px;top:709px;" width="16" height="15" viewBox="0 0 16 15"><rect x="1.5" y="1.5" width="13" height="12" fill="none" stroke="#3b3a39" stroke-width="1.1"/><rect x="4" y="4" width="8" height="7" fill="none" stroke="#3b3a39" stroke-width="1"/><path d="M5.5 6.3 H10.5 M5.5 8.6 H10.5" stroke="#3b3a39" stroke-width="0.9"/></svg>
<svg style="position:absolute;left:858px;top:709px;" width="16" height="15" viewBox="0 0 16 15"><path d="M1.5 1.5 H14.5 V13.5 H1.5 Z M6 1.5 V8 H10 V1.5 M1.5 8 H6" fill="none" stroke="#3b3a39" stroke-width="1.1"/></svg>
<div style="left:892px;top:715px;width:7px;height:1px;background:#3b3a39;"></div>
<div style="left:905px;top:715px;width:100px;height:1px;background:#8a8886;"></div>
<div style="left:955px;top:712px;width:1px;height:7px;background:#605e5c;"></div>
<div style="left:971px;top:709px;width:5px;height:14px;background:#605e5c;"></div>
<svg style="position:absolute;left:1009px;top:709px;" width="10" height="12" viewBox="0 0 10 12"><path d="M5 2 V10 M1 6 H9" stroke="#3b3a39" stroke-width="1.1"/></svg>
<div class="t" style="left:1031.00px;top:710.36px;font-size:12.21px;line-height:12.21px;color:#3b3a39;transform:scaleX(0.8542);transform-origin:0 0;">214%</div>
</body></html>
